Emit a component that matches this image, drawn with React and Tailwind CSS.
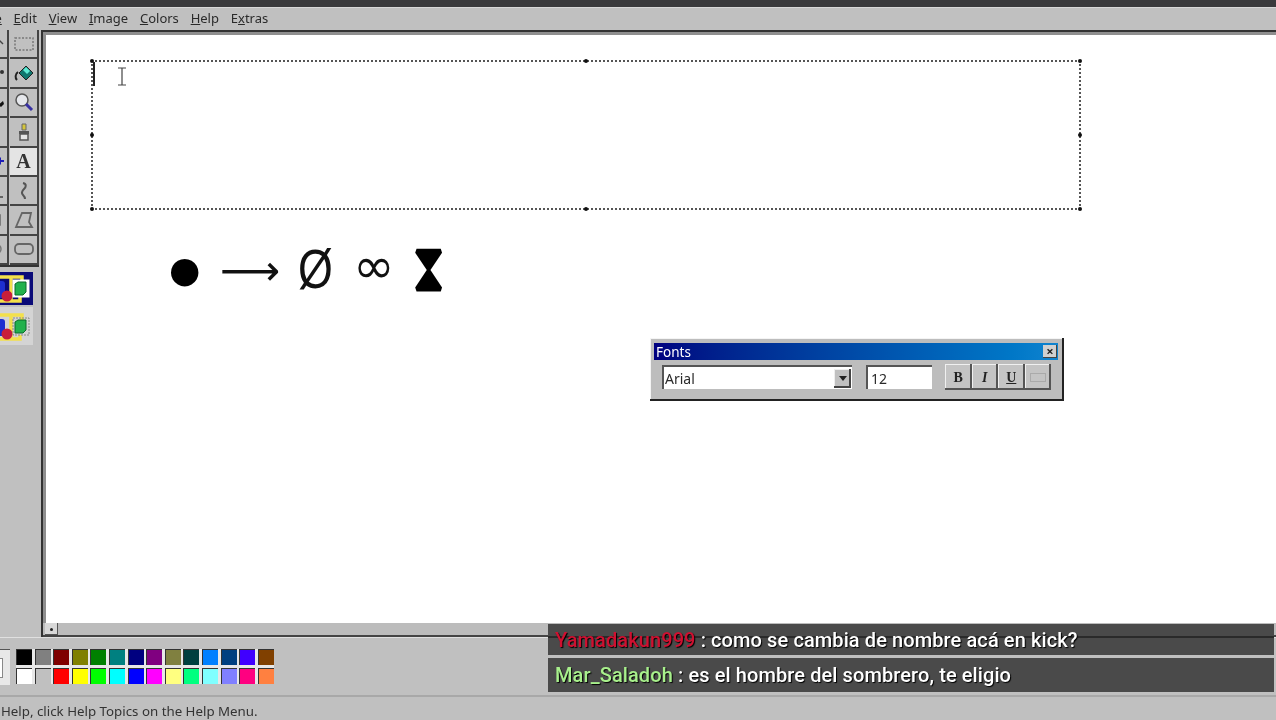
import React from 'react';

const menus = [
  ['F', 'ile', ''],
  ['', 'E', 'dit'],
  ['', 'V', 'iew'],
  ['', 'I', 'mage'],
  ['', 'C', 'olors'],
  ['', 'H', 'elp'],
  ['E', 'x', 'tras'],
];

const palette = [
  ['#000000', '#808080', '#800000', '#808000', '#008000', '#008080', '#000080', '#800080', '#808040', '#004040', '#0080ff', '#004080', '#4000ff', '#804000'],
  ['#ffffff', '#c0c0c0', '#ff0000', '#ffff00', '#00ff00', '#00ffff', '#0000ff', '#ff00ff', '#ffff80', '#00ff80', '#80ffff', '#8080ff', '#ff0080', '#ff8040'],
];

const Icon = ({ children }) => (
  <svg width="20" height="20" viewBox="0 0 20 20" fill="none" stroke="#555" strokeWidth="1.5">
    {children}
  </svg>
);

// left column is mostly cut off by the window edge, only the right tip shows
const tools = [
  [<Icon><path d="M14 5l5 5" stroke="#444" /></Icon>, <Icon><rect x="1" y="4" width="18" height="12" strokeDasharray="2 1.5" stroke="#777" /></Icon>],
  [<Icon><circle cx="18" cy="9" r="2" fill="#333" stroke="none" /></Icon>, <svg width="20" height="20" viewBox="0 0 20 20"><path d="M5 10l7-7 7 7-7 7z" fill="#0f766e" stroke="#222" /><path d="M9 7l3-3 4 4-3 3z" fill="#5eead4" /><path d="M4 9C1 11 1 15 3 17" stroke="#222" strokeWidth="2" fill="none" /></svg>],
  [<Icon><path d="M14 13l5-4 1 3-3 3z" fill="#111" stroke="none" /></Icon>, <svg width="20" height="20" viewBox="0 0 20 20"><circle cx="8" cy="8" r="6" fill="#e5e7eb" stroke="#555" strokeWidth="1.5" /><path d="M12 12l6 6" stroke="#3730a3" strokeWidth="3" /></svg>],
  [<Icon><path d="M15 4v12" stroke="#777" /></Icon>, <svg width="20" height="20" viewBox="0 0 20 20"><path d="M8 2h4v6H8z" fill="#d4c53a" stroke="#666" /><path d="M5 9h10v3H5z" fill="#555" /><path d="M6 12h8v6H6z" fill="#e5e5e5" stroke="#555" strokeWidth="1.5" /></svg>],
  [<svg width="20" height="20" viewBox="0 0 20 20"><path d="M13 10l4-4v3h3v2h-3v3z" fill="#1d1db8" /></svg>, <span className="font-['Liberation_Serif',serif] text-[20px] font-bold leading-none text-[#333]">A</span>],
  [<Icon><path d="M16 16h3" stroke="#444" /></Icon>, <Icon><path d="M9 2c4 1 3 4 1 6s-3 4-1 6 2 3 2 4" strokeWidth="2" /></Icon>],
  [<Icon><rect x="4" y="5" width="12" height="10" stroke="#666" /></Icon>, <Icon><path d="M8 3h9l-2 9 3 5H2z" stroke="#666" strokeWidth="1.8" /></Icon>],
  [<Icon><ellipse cx="10" cy="10" rx="7" ry="5.5" stroke="#777" /></Icon>, <Icon><rect x="1" y="5" width="18" height="10" rx="4" stroke="#666" strokeWidth="1.8" /></Icon>],
];

const ShapesOption = ({ light }) => (
  <svg width="33" height="33" viewBox="0 0 33 33">
    <path d="M0 5h22v5M0 29h20v-4M11 5v24" fill="none" stroke="#f3e04b" strokeWidth="3.5" />
    <rect x="-3" y="9" width="8" height="17" rx="3" fill="#1d2fd0" />
    <circle cx="7" cy="24" r="5.5" fill="#c81e3a" />
    <rect x="13" y="8" width="16" height="17" fill={light ? 'none' : '#fff'} stroke={light ? '#888' : '#fff'} strokeDasharray={light ? '2 1' : undefined} />
    <path d="M15 12l3-2h8v10l-3 3h-8z" fill="#22b14c" stroke="#0b6b2a" />
  </svg>
);

const Handle = ({ className }) => (
  <span className={`absolute h-[4px] w-[4px] rounded-full bg-[#111] ${className}`} />
);

const ToolBtn = ({ children }) => (
  <div className="flex h-[26px] w-[26.5px] items-center justify-center bg-[#c4c4c4] shadow-[inset_-2px_-2px_0_#555,inset_1px_1px_0_#f0f0f0]">
    {children}
  </div>
);

const App = () => {
  return (
    <div className="relative flex h-[720px] w-[1276px] flex-col overflow-hidden bg-[#c0c0c0] font-['Noto_Sans',sans-serif] text-[#2a2a2a] blur-[0.4px]">
      <div className="h-[7px] bg-[#3a3a3c]" />

      {/* menu */}
      <div className="flex h-[23px] items-center gap-[11.8px] border-t border-[#d8d8d8] text-[13px]">
        {menus.map(([a, b, c], i) => (
          <span key={i} className={i === 0 ? '-ml-[19px]' : ''}>
            {a}<u>{b}</u>{c}
          </span>
        ))}
      </div>

      <div className="flex min-h-0 flex-1">
        {/* toolbox */}
        <div className="w-[41px] shrink-0 overflow-hidden">
          <div className="-ml-[20px] grid w-[59px] grid-cols-2 gap-x-[1px] border-b-2 border-[#333]">
            {tools.map(([left, right], i) => (
              <React.Fragment key={i}>
                <div className="flex h-[29.4px] items-center justify-center border-b-2 border-r-2 border-[#444] bg-[#c0c0c0]">
                  {left}
                </div>
                <div className={`flex h-[29.4px] items-center justify-center border-b-2 border-r-2 border-[#444] ${i === 4 ? 'bg-[#e4e4e4]' : 'bg-[#c0c0c0]'}`}>
                  {right}
                </div>
              </React.Fragment>
            ))}
          </div>
          <div className="mt-[5px] flex w-[33px] flex-col gap-[2px]">
            <div className="flex h-[33px] items-center justify-end overflow-hidden bg-[#0a0a78]">
              <ShapesOption />
            </div>
            <div className="flex h-[38px] items-center justify-end overflow-hidden bg-[#d4d4d4]">
              <ShapesOption light />
            </div>
          </div>
        </div>

        {/* canvas */}
        <div className="flex min-w-0 flex-1 flex-col border-l-2 border-t-2 border-[#333] bg-[#8f8f8f]">
          <div className="relative ml-[3px] mt-[3px] min-h-0 flex-1 bg-white">
            <div className="absolute left-[45px] top-[25px] h-[150px] w-[990px] border-2 border-dotted border-[#555]">
              <Handle className="-left-[3px] -top-[3px]" />
              <Handle className="left-[491px] -top-[3px]" />
              <Handle className="-right-[3px] -top-[3px]" />
              <Handle className="-left-[3px] top-[71px]" />
              <Handle className="-right-[3px] top-[71px]" />
              <Handle className="-bottom-[3px] -left-[3px]" />
              <Handle className="-bottom-[3px] left-[491px]" />
              <Handle className="-bottom-[3px] -right-[3px]" />
              <span className="absolute left-0 top-0 h-[24px] w-[2px] bg-[#222]" />
              {/* I-beam mouse pointer */}
              <svg className="absolute left-[24px] top-[5px]" width="10" height="20" viewBox="0 0 10 20" fill="none" stroke="#444" strokeWidth="1.2">
                <path d="M1 1h8M5 1v17M1 18h8" />
              </svg>
            </div>

            {/* symbols typed on the canvas */}
            <span className="absolute left-[123px] top-[213px] font-['DejaVu_Sans',sans-serif] text-[36px] leading-[44px] text-black">●</span>
            <span className="absolute left-[174px] top-[214px] font-['DejaVu_Sans',sans-serif] text-[42px] leading-[44px] text-[#111]">⟶</span>
            <span className="absolute left-[252px] top-[212px] origin-left scale-x-[0.8] font-['Liberation_Sans',sans-serif] text-[56px] leading-[44px] text-[#111]">Ø</span>
            <span className="absolute left-[307px] top-[209px] font-['DejaVu_Sans',sans-serif] text-[50px] leading-[44px] text-[#111]">∞</span>
            <span className="absolute left-[366px] top-[210px] origin-center scale-y-150 font-['DejaVu_Sans',sans-serif] text-[47px] leading-[44px] text-black">⧗</span>

            {/* Fonts tool window */}
            <div className="absolute left-[604px] top-[303px] h-[63px] w-[414px] border-b-2 border-r-2 border-[#222] bg-[#bdbdbd] px-[4px] pt-[5px] shadow-[inset_1px_1px_0_#f4f4f4]">
              <div className="flex h-[17px] items-center justify-between bg-gradient-to-r from-[#000080] to-[#1084d0] pl-[2px] pr-[1px]">
                <span className="pt-[2px] text-[13.5px] leading-none text-white">Fonts</span>
                <span className="flex h-[13px] w-[14px] items-center justify-center bg-[#d0d0d0] text-[13px] font-bold leading-none text-[#222] shadow-[inset_-1px_-1px_0_#444]">×</span>
              </div>
              <div className="mt-[4px] flex items-center pl-[8px]">
                <div className="flex h-[24px] w-[190px] items-center justify-between border-l-2 border-t-2 border-[#555] bg-white pl-[1px] pr-[1px] text-[14px]">
                  <span>Arial</span>
                  <span className="flex h-[19px] w-[17px] items-center justify-center bg-[#c0c0c0] shadow-[inset_-2px_-2px_0_#444,inset_1px_1px_0_#eee]">
                    <svg width="8" height="5" viewBox="0 0 8 5"><path d="M0 0h8L4 5z" fill="#222" /></svg>
                  </span>
                </div>
                <div className="ml-[14px] flex h-[24px] w-[66px] items-center border-l-2 border-t-2 border-[#555] bg-white pl-[3px] text-[14px]">12</div>
                <div className="ml-[13px] flex">
                  <ToolBtn><b className="font-['Liberation_Serif',serif] text-[14px] text-[#222]">B</b></ToolBtn>
                  <ToolBtn><i className="font-['Liberation_Serif',serif] text-[14px] font-bold text-[#222]">I</i></ToolBtn>
                  <ToolBtn><u className="font-['Liberation_Serif',serif] text-[14px] font-bold text-[#222]">U</u></ToolBtn>
                  <ToolBtn>
                    <span className="h-[9px] w-[16px] border border-[#aaa]" />
                  </ToolBtn>
                </div>
              </div>
            </div>
          </div>
          {/* scrollbar */}
          <div className="h-[14px] shrink-0 border-b-2 border-[#444] bg-[#bcbcbc]">
            <div className="ml-[2px] flex h-[12px] w-[13px] items-center justify-center bg-[#d8d8d8] shadow-[inset_-1px_-1px_0_#555]">
              <span className="h-[3px] w-[3px] rounded-full bg-[#222]" />
            </div>
          </div>
        </div>
      </div>

      {/* palette */}
      <div className="flex h-[58px] shrink-0 items-start gap-[6px] border-t border-[#e0e0e0] pt-[11px]">
        <div className="-ml-[25px] flex h-[36px] w-[35px] items-center justify-center border-l border-t border-[#555] bg-[#e8e8e8]">
          <span className="h-[20px] w-[20px] border border-[#888] bg-white" />
        </div>
        <div className="flex flex-col gap-[3px] bg-[#e8e8e8]">
          {palette.map((row, r) => (
            <div key={r} className="flex gap-[2.6px]">
              {row.map(c => (
                <span
                  key={c}
                  className="h-[16px] w-[16px] border-l border-t border-[#333]"
                  style={{ backgroundColor: c }}
                />
              ))}
            </div>
          ))}
        </div>
      </div>

      {/* status */}
      <div className="flex h-[25px] shrink-0 items-end border-t-2 border-[#a8a8a8] pl-[1px] text-[13.3px] leading-[18px] text-[#333]">
        Help, click Help Topics on the Help Menu.
      </div>

      {/* chat overlay from the stream */}
      <div className="absolute left-[548px] top-[624px] flex w-[726px] flex-col gap-[3px] font-['Roboto',sans-serif] text-[20px] font-medium tracking-[0.1px] text-white [text-shadow:1px_1px_1px_#000]">
        <div className="relative flex h-[31px] items-center bg-[#4a4a4a] pl-[7px]">
          <span className="absolute inset-x-0 top-[12px] h-[2px] bg-[#2a2a2a]" />
          <span className="relative">
            <span className="text-[#d01030]">Yamadakun999</span> : como se cambia de nombre acá en kick?
          </span>
        </div>
        <div className="flex h-[34px] items-center bg-[#4a4a4a] pl-[7px]">
          <span>
            <span className="text-[#a8f08c]">Mar_Saladoh</span> : es el hombre del sombrero, te eligio
          </span>
        </div>
      </div>
    </div>
  );
};

export default App;
